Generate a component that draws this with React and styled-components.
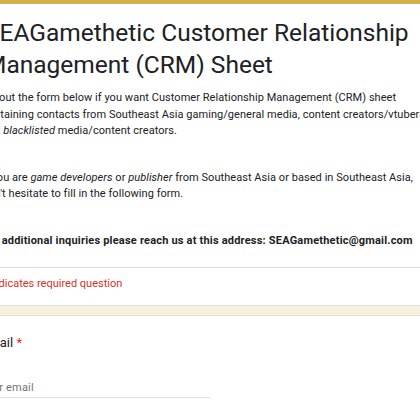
import React from "react";
import styled, { createGlobalStyle } from "styled-components";

const GlobalStyle = createGlobalStyle`
	body {
		margin: 0;
		background: #ffffff;
		font-family: Roboto, "Liberation Sans", sans-serif;
		color: #202124;
	}
`;

const App = () => {
	return (
		<Page>
			<GlobalStyle />
			<HeaderCard>
				<Title>SEAGamethetic Customer Relationship Management (CRM) Sheet</Title>
				<Description>
					<Para>
						Fill out the form below if you want Customer Relationship Management (CRM) sheet
						<br />
						containing contacts from Southeast Asia gaming/general media, content creators/vtubers,
						<br />
						and <em>blacklisted</em> media/content creators.
					</Para>
					<Para>
						If you are <em>game developers</em> or <em>publisher</em> from Southeast Asia or based in
						Southeast Asia,
						<br />
						don't hesitate to fill in the following form.
					</Para>
					<Para>
						<strong>For additional inquiries please reach us at this address: SEAGamethetic@gmail.com</strong>
					</Para>
				</Description>
				<Required>* Indicates required question</Required>
			</HeaderCard>
			<Gap />
			<QuestionCard>
				<QuestionTitle>
					Email <Star>*</Star>
				</QuestionTitle>
				<Input placeholder="Your email" />
			</QuestionCard>
		</Page>
	);
};

export default App;

const Page = styled.div`
	width: 420px;
	height: 420px;
	overflow: hidden;
	background: #f6f2df;
`;

const HeaderCard = styled.div`
	margin-left: -36px;
	width: 520px;
	background: #fff;
	border-top: 4px solid #d4b04a;
	border-bottom: 1px solid #e4e1d8;
`;

const Title = styled.h1`
	margin: 0;
	padding: 13px 18px 0 21px;
	font-size: 24.5px;
	line-height: 32px;
	font-weight: 400;
	color: #202124;
`;

const Description = styled.div`
	padding: 9px 18px 18px;
	font-size: 11px;
	line-height: 16.5px;
	letter-spacing: 0.05px;
	white-space: nowrap;
	border-bottom: 1px solid #dadce0;
`;

const Para = styled.p`
	margin: 0 0 30px;

	&:last-child {
		margin-bottom: 0;
	}

	strong {
		font-weight: 700;
		letter-spacing: 0.2px;
	}
`;

const Required = styled.div`
	padding: 8px 18px 13px;
	font-size: 11px;
	line-height: 16px;
	color: #d93025;
`;

const Gap = styled.div`
	height: 9px;
`;

const QuestionCard = styled.div`
	margin-left: -36px;
	width: 520px;
	height: 120px;
	background: #fff;
	border-top: 1px solid #e4e1d8;
	padding: 17px 18px;
	box-sizing: border-box;
`;

const QuestionTitle = styled.div`
	font-size: 13px;
	line-height: 20px;
	margin-left: -1px;
	color: #202124;
`;

const Star = styled.span`
	color: #d93025;
`;

const Input = styled.input`
	display: block;
	margin-top: 28px;
	margin-left: -2px;
	width: 230px;
	border: none;
	border-bottom: 1px solid #e0e0e0;
	padding: 0 0 2px;
	font-family: Roboto, "Liberation Sans", sans-serif;
	font-size: 11px;
	line-height: 14px;
	letter-spacing: 0.2px;
	color: #202124;
	outline: none;
	background: transparent;

	&::placeholder {
		color: #70757a;
	}
`;
